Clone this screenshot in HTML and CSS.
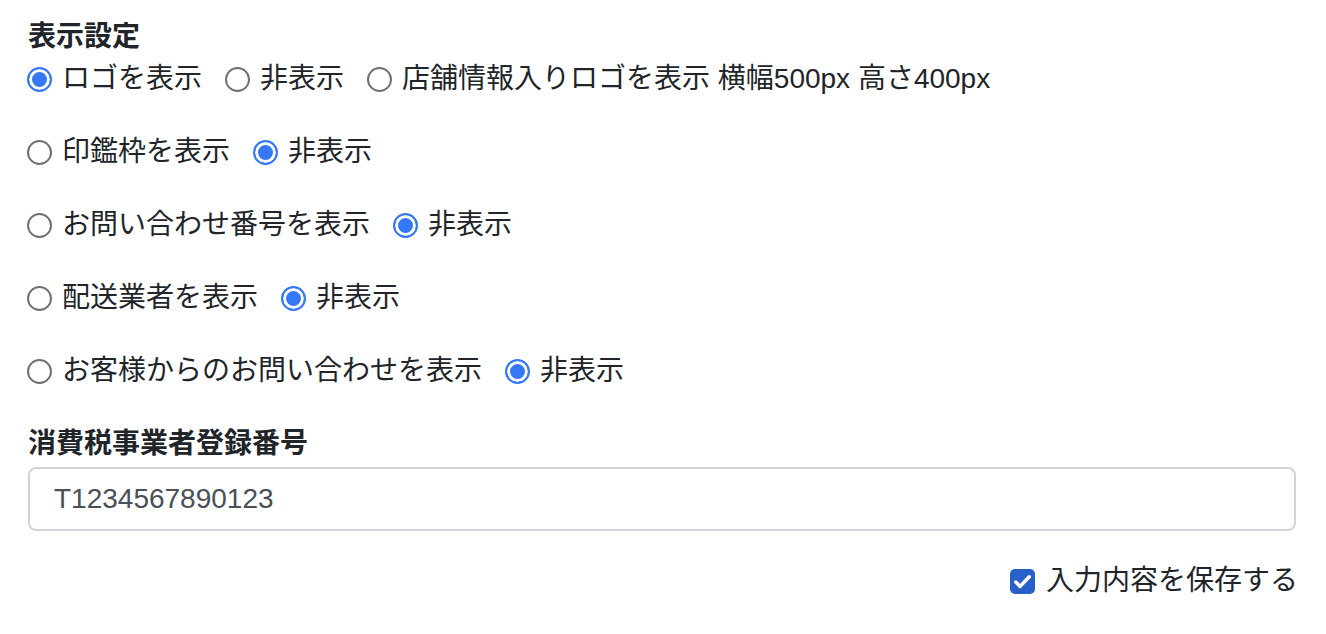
FILE: index.html
```html
<!DOCTYPE html>
<html lang="ja">
  <head>
    <meta charset="UTF-8" />
    <meta name="viewport" content="width=device-width, initial-scale=1.0" />
    <title>表示設定</title>
    <link rel="stylesheet" href="styles.css">
  </head>
  <body>
    <div class="settings">
      <div class="section-title">表示設定</div>
      <div class="radio-row">
        <label class="radio"><input type="radio" name="logo" checked>ロゴを表示</label>
        <label class="radio"><input type="radio" name="logo">非表示</label>
        <label class="radio"><input type="radio" name="logo">店舗情報入りロゴを表示 横幅500px 高さ400px</label>
      </div>
      <div class="radio-row">
        <label class="radio"><input type="radio" name="stamp">印鑑枠を表示</label>
        <label class="radio"><input type="radio" name="stamp" checked>非表示</label>
      </div>
      <div class="radio-row">
        <label class="radio"><input type="radio" name="inquiry-no">お問い合わせ番号を表示</label>
        <label class="radio"><input type="radio" name="inquiry-no" checked>非表示</label>
      </div>
      <div class="radio-row">
        <label class="radio"><input type="radio" name="carrier">配送業者を表示</label>
        <label class="radio"><input type="radio" name="carrier" checked>非表示</label>
      </div>
      <div class="radio-row">
        <label class="radio"><input type="radio" name="inquiry">お客様からのお問い合わせを表示</label>
        <label class="radio"><input type="radio" name="inquiry" checked>非表示</label>
      </div>

      <div class="section-title">消費税事業者登録番号</div>
      <input class="text-input" type="text" value="T1234567890123">

      <div class="save-row">
        <label class="check">
          <input type="checkbox" checked>
          <span class="check-box">
            <svg width="25" height="25" viewBox="0 0 24 24"><path d="M5.5 12.5l4.2 4.2L18.5 7.5" fill="none" stroke="#fff" stroke-width="3.4" stroke-linecap="round" stroke-linejoin="round"/></svg>
          </span>
          入力内容を保存する
        </label>
      </div>
    </div>
  </body>
</html>
```

FILE: styles.css
```css
body {
  margin: 0;
  font-family: "Liberation Sans", "Noto Sans CJK JP", sans-serif;
  font-size: 28px;
  line-height: 42px;
  color: #212529;
  background: #fff;
}

.settings {
  padding: 16px 30px 0 27px;
  display: flex;
  flex-direction: column;
}

.section-title {
  font-weight: bold;
  padding-left: 1px;
}

.radio-row {
  display: flex;
  gap: 23px;
  margin-bottom: 31px;
}

.radio {
  display: flex;
  align-items: center;
  gap: 10px;
}

.radio input {
  appearance: none;
  flex-shrink: 0;
  box-sizing: border-box;
  margin: 0;
  width: 25px;
  height: 25px;
  border: 2px solid #707070;
  border-radius: 50%;
  background: #fff;
}

.radio input:checked {
  border: 2.5px solid #3478f6;
  background: #3478f6;
  box-shadow: inset 0 0 0 3px #fff;
}

.text-input {
  margin: 2px 0 0 1px;
  height: 64px;
  box-sizing: border-box;
  padding: 0 24px;
  border: 2px solid #ced4da;
  border-radius: 8px;
  font-family: "Liberation Sans", sans-serif;
  font-size: 28px;
  color: #495057;
}

.save-row {
  display: flex;
  justify-content: flex-end;
  margin-top: 29px;
  margin-right: -2px;
}

.check {
  display: flex;
  align-items: center;
  gap: 11px;
}

.check input {
  display: none;
}

.check-box {
  flex-shrink: 0;
  width: 25px;
  height: 25px;
  border-radius: 5px;
  background: #2760c9;
  display: flex;
  align-items: center;
  justify-content: center;
}
```
